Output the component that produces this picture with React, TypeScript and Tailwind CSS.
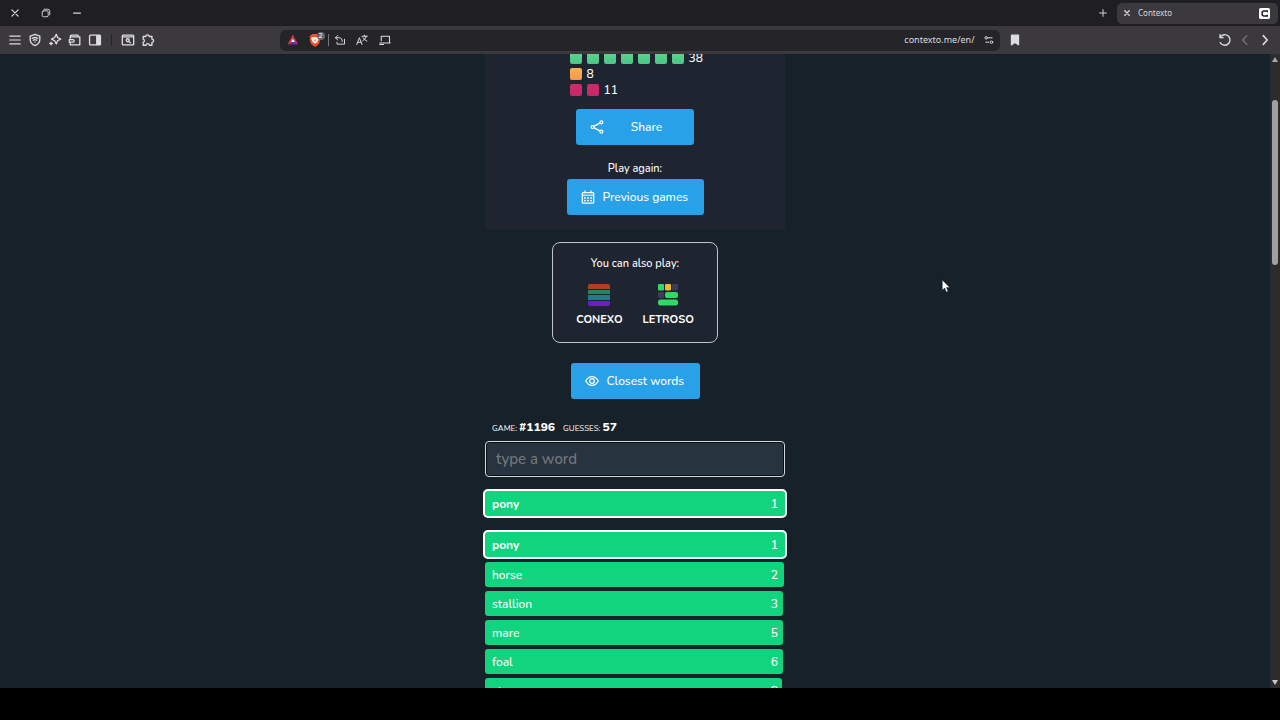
import type { ReactNode } from "react";

type Guess = { word: string; rank: number; width: string };

const guesses: Guess[] = [
  { word: "horse", rank: 2, width: "99.7%" },
  { word: "stallion", rank: 3, width: "99.4%" },
  { word: "mare", rank: 5, width: "99.2%" },
  { word: "foal", rank: 6, width: "99.2%" },
  { word: "steer", rank: 8, width: "99%" },
];

function Icon({ children, className = "size-3.5", width = 1.5 }: { children: ReactNode; className?: string; width?: number }) {
  return (
    <svg viewBox="0 0 16 16" fill="none" stroke="currentColor" strokeWidth={width} strokeLinecap="round" strokeLinejoin="round" className={`shrink-0 ${className}`} aria-hidden="true">
      {children}
    </svg>
  );
}

function IconButton({ label, children, className = "" }: { label: string; children: ReactNode; className?: string }) {
  return (
    <button type="button" aria-label={label} className={`flex size-5 shrink-0 items-center justify-center ${className}`}>
      {children}
    </button>
  );
}

function TabStrip() {
  return (
    <div className="flex h-[26px] shrink-0 items-center justify-between bg-[#1f1e23] pr-0.5 text-[#d8d8da]">
      <div className="flex items-center gap-[11px] pl-[5px]">
        <IconButton label="Close window"><Icon className="size-2.5" width={2}><path d="M3 3l10 10M13 3L3 13" /></Icon></IconButton>
        <IconButton label="Restore window"><Icon className="size-2.5"><rect x="2" y="4.500" width="9.500" height="9.500" rx="2" /><path d="M5 2h6a3 3 0 0 1 3 3v6" /></Icon></IconButton>
        <IconButton label="Minimize window"><Icon className="size-2.5" width={2}><path d="M2.500 8h11" /></Icon></IconButton>
      </div>
      <div className="flex items-center gap-1">
        <IconButton label="New tab"><Icon className="size-3" width={1.300}><path d="M8 3.500v9M3.500 8h9" /></Icon></IconButton>
        <div className="flex h-[21px] w-[161px] items-center rounded-[5px] bg-[#3b393e] pr-2">
          <IconButton label="Close tab"><Icon className="size-2.5" width={2.200}><path d="M4.500 4.500l7 7M11.500 4.500l-7 7" /></Icon></IconButton>
          <span className="flex-1 pl-px text-[8px] leading-4">Contexto</span>
          <svg viewBox="0 0 12 12" className="size-[11px]" aria-hidden="true">
            <rect width="12" height="12" rx="2" fill="#fff" />
            <path d="M9 4.600V3.200H5L3.400 4.500v3L5 8.800h4V7.400" fill="none" stroke="#1b1b1e" strokeWidth="1.600" />
          </svg>
        </div>
      </div>
    </div>
  );
}

function Toolbar() {
  return (
    <div className="flex h-7 shrink-0 items-center bg-[#3b393e] text-[#dddddf]">
      <div className="flex flex-1 items-center pl-[5px]">
        <IconButton label="Menu"><Icon width={1.300}><path d="M2 3.500h12M2 8h12M2 12.500h12" /></Icon></IconButton>
        <IconButton label="VPN"><Icon><path d="M8 1.500l5.500 2v4c0 3.500-2.500 5.800-5.500 7-3-1.200-5.500-3.500-5.500-7v-4z" /><path d="M4.800 6.200q3.200-2.200 6.400 0M6 8.300q2-1.300 4 0M8 10.300v.1" /></Icon></IconButton>
        <IconButton label="Assistant"><Icon><path d="M9.500 1.500l1.400 3.600 3.600 1.900-3.600 1.900-1.400 3.600-1.900-3.600L4 7l3.600-1.900zM3.500 10.500v3M2 12h3" /></Icon></IconButton>
        <IconButton label="Wallet"><Icon><path d="M2.500 6V4.500q0-2 2-2h7v2M2.500 4.500h11v9h-11V11.500M1.500 7.500h4a1.500 1.500 0 0 1 0 3h-4z" /></Icon></IconButton>
        <IconButton label="Sidebar"><Icon><rect x="1.800" y="2.500" width="12.400" height="11" rx="1" /><path d="M10 3h4v10h-4z" fill="currentColor" /></Icon></IconButton>
        <span className="mx-[6px] h-3 w-px bg-[#252429]" />
        <IconButton label="Search tabs"><Icon><rect x="1.500" y="2.500" width="13" height="11" rx="1" /><path d="M2 4.500h12" /><circle cx="7.700" cy="8.300" r="1.700" /><path d="M9 9.600l1.800 1.700" /></Icon></IconButton>
        <IconButton label="Extensions"><Icon><path d="M2.500 4h3a1.900 1.900 0 1 1 3.800 0h3.200v3a1.900 1.900 0 1 1 0 3.800V14H9.500a1.800 1.800 0 0 0-3.600 0H2.500v-3.500a1.800 1.800 0 0 0 0-3.500z" /></Icon></IconButton>
      </div>

      <div className="ml-1 flex h-[21px] w-[720px] shrink items-center rounded-[6px] bg-[#252429] pr-px pl-[3px]">
        <IconButton label="Rewards">
          <svg viewBox="0 0 14 14" className="size-3" aria-hidden="true"><path d="M7 1L1 12h12z" fill="#b02d83" /><path d="M7 1L1 12l6-3z" fill="#e64035" /><path d="M1 12h12L7 8.500z" fill="#6b2ca0" /><path d="M7 5.500L4.800 9.300h4.400z" fill="#fff" /></svg>
        </IconButton>
        <div className="relative ml-0.5 flex">
          <IconButton label="Shields, 2 blocked">
            <svg viewBox="0 0 14 14" className="size-3.5" aria-hidden="true"><path d="M4.500 1h5l1.500 1 1.500 1.500-.5 1.500.3 1.500L11 11l-4 3-4-3-1.300-4.500L2 5l-.5-1.500L3 2z" fill="#ec512b" /><path d="M4 4.300h6l1 1.500-1.700 2.500.3.800L7 10.500 4.400 9.100l.3-.8L3 5.800z" fill="#fff" /><path d="M5.500 6l.8.700v1.800M8.500 6l-.8.700v1.800" stroke="#ec512b" fill="none" strokeWidth=".7" /></svg>
          </IconButton>
          <span className="absolute top-0.5 left-3 flex h-2 w-2 items-center justify-center rounded-full bg-[#66656a] text-[7px] leading-[8px] text-white">2</span>
        </div>
        <span className="mr-px ml-[3px] h-3 w-px bg-[#77767b]" />
        <IconButton label="Open in app"><Icon className="size-3" width={1.300}><path d="M5 2L2 5l3 3M2 5h5q4 0 4 5M4 11v2.500h10V7" /></Icon></IconButton>
        <IconButton label="Translate" className="ml-0.5"><Icon className="size-3" width={1.300}><path d="M1 14l3.500-9L8 14M2.300 11h4.500M8 3h7M11.500 1.500V3M14 3q-1 4-5 6M9.500 5q1.500 3 5 4.500" /></Icon></IconButton>
        <IconButton label="Send to device" className="ml-[3px]"><Icon className="size-3" width={1.400}><path d="M3 9V3h11v8M1 12h14M1 14h5" /></Icon></IconButton>
        <input aria-label="Address" defaultValue="contexto.me/en/" className="min-w-0 flex-1 bg-transparent text-right text-[9px] leading-4 outline-none" />
        <IconButton label="Site settings" className="ml-1"><Icon className="size-2.5" width={1.600}><path d="M7 4.500h6M3 11.500h5" /><circle cx="3.500" cy="4.500" r="2" /><circle cx="12" cy="11.500" r="2" /></Icon></IconButton>
      </div>

      <div className="flex flex-1 items-center justify-between px-[5px]">
        <IconButton label="Bookmark"><Icon><path d="M4 2.500h8v11L8 10.500l-4 3z" fill="currentColor" /></Icon></IconButton>
        <div className="flex">
          <IconButton label="Reload"><Icon><path d="M3 4.200a6 6 0 1 1-.5 6.800M2.300 1.800v3.500h3.500" /></Icon></IconButton>
          <IconButton label="Forward" className="text-[#78777b]"><Icon><path d="M10 3L5.500 8l4.500 5" /></Icon></IconButton>
          <IconButton label="Back"><Icon width={1.800}><path d="M6 3l4.500 5L6 13" /></Icon></IconButton>
        </div>
      </div>
    </div>
  );
}

function Tiles({ count, tone, total }: { count: number; tone: string; total: number }) {
  return (
    <div className="flex h-4 items-center gap-[5px] text-[12px] leading-4 font-medium">
      {Array.from({ length: count }, (_, i) => (
        <span key={i} className={`size-3 shrink-0 rounded-[2px] ${tone}`} />
      ))}
      <span>{total}</span>
    </div>
  );
}

const buttonStyle = "flex h-9 items-center rounded-[3px] bg-[#29a1e9] text-[12px] leading-5 font-medium";

function OtherGame({ name, children }: { name: string; children: ReactNode }) {
  return (
    <a href="#" className="flex flex-col items-center gap-[6px] text-[11px] leading-4 font-bold">
      <svg viewBox="0 0 22 22" className="size-[22px]" aria-hidden="true">{children}</svg>
      {name}
    </a>
  );
}

function Highlight() {
  return (
    <div className="-mx-0.5 flex h-[29px] items-center justify-between rounded-[5px] border-2 border-white bg-[#12d47e] px-[7px] text-[12px] leading-5 font-bold">
      <span>pony</span>
      <span className="font-semibold">1</span>
    </div>
  );
}

function Game() {
  return (
    <main className="min-w-0 flex-1 overflow-hidden bg-[#17212a] font-['Nunito','Open_Sans','Noto_Sans',sans-serif] text-white">
      <div className="mx-auto flex w-[300px] flex-col">
        <section className="flex flex-col items-center bg-[#1f2530] pb-[14px]">
          <div className="-mt-1 w-[131px]">
            <Tiles count={7} tone="bg-linear-to-b from-[#5bd68d] to-[#4cc586]" total={38} />
            <Tiles count={1} tone="bg-linear-to-b from-[#f5b44d] to-[#f79550]" total={8} />
            <Tiles count={2} tone="bg-linear-to-b from-[#d12b66] to-[#c52868]" total={11} />
          </div>
          <button type="button" className={`${buttonStyle} mt-[11px] w-[118px] px-[14px]`}>
            <Icon className="size-3.5" width={1.400}><circle cx="3" cy="8" r="1.700" /><circle cx="13" cy="2.700" r="1.700" /><circle cx="13" cy="13.300" r="1.700" /><path d="M4.800 7l6.400-3.400M4.800 9l6.400 3.400" /></Icon>
            <span className="flex-1 pl-[9px] text-center">Share</span>
          </button>
          <p className="mt-4 text-[11px] leading-4 font-medium">Play again:</p>
          <button type="button" className={`${buttonStyle} mt-0.5 w-[137px] gap-2 px-[14px] whitespace-nowrap`}>
            <Icon className="size-3.5" width={1.400}><rect x="1.500" y="3" width="13" height="12" rx="1" /><path d="M2 6h12M4.500 1v2M11.500 1v2" /><path d="M4.500 9h.1M8 9h.1M11.500 9h.1M4.500 12h.1M8 12h.1M11.500 12h.1" strokeWidth="2" /></Icon>
            <span>Previous games</span>
          </button>
        </section>

        <section className="mx-auto mt-[13px] flex h-[101px] w-[166px] flex-col items-center rounded-[8px] border border-[#bfc3ca] bg-[#1f2530] pt-[13px]">
          <p className="text-[11px] leading-4 font-medium">You can also play:</p>
          <div className="mt-3 flex gap-5">
            <OtherGame name="CONEXO">
              <path d="M2 0h18a2 2 0 0 1 2 2v3H0V2a2 2 0 0 1 2-2z" fill="#b43e1b" />
              <path d="M0 6h22v4H0z" fill="#26845a" />
              <path d="M0 11h22v5H0z" fill="#217b91" />
              <path d="M0 17h22v3a2 2 0 0 1-2 2H2a2 2 0 0 1-2-2z" fill="#6720c4" />
            </OtherGame>
            <OtherGame name="LETROSO">
              <rect x="1" width="6" height="6.500" rx="1" fill="#31d865" /><rect x="8" width="6" height="6.500" rx="1" fill="#eabb2b" /><rect x="15" width="6" height="6.500" rx="1" fill="#3d3c5d" />
              <rect x="1" y="8" width="6" height="6" rx="1" fill="#3d3c5d" /><rect x="8" y="8" width="13" height="6" rx="2" fill="#31d865" /><rect x="1" y="15.500" width="20" height="6" rx="2.500" fill="#31d865" />
            </OtherGame>
          </div>
        </section>

        <button type="button" className={`${buttonStyle} mx-auto mt-5 w-[129px] gap-2 px-[14px] whitespace-nowrap`}>
          <Icon className="size-3.5" width={1.400}><path d="M.8 8Q3.500 3 8 3t7.200 5Q12.500 13 8 13T.8 8z" /><circle cx="8" cy="8" r="2.700" /></Icon>
          <span>Closest words</span>
        </button>

        <div className="mt-[18px] flex h-5 items-baseline gap-2 px-[7px] text-[8px] leading-5">
          <span>GAME: <b className="text-[12px] font-extrabold">#1196</b></span>
          <span>GUESSES: <b className="text-[12px] font-extrabold">57</b></span>
        </div>
        <input aria-label="Word" placeholder="type a word" className="mt-1 h-9 w-full rounded-[4px] border border-[#d5d7da] bg-[#273440] px-[10px] text-[15px] leading-5 font-medium ring-1 ring-[#0b0f13] outline-none ring-inset placeholder:text-[#73787c]" />
        <div className="mt-3"><Highlight /></div>
        <div className="mt-3"><Highlight /></div>
        <ul className="mt-[3px] flex flex-col gap-1 text-[12px] leading-5 font-medium">
          {guesses.map((guess) => (
            <li key={guess.word} className="grid h-[25px] items-center">
              <span className="col-start-1 row-start-1 h-full rounded-[3px] bg-[#12d47e]" style={{ width: guess.width }} />
              <span className="col-start-1 row-start-1 flex justify-between px-[7px]"><span>{guess.word}</span><span>{guess.rank}</span></span>
            </li>
          ))}
        </ul>
      </div>
    </main>
  );
}

export default function App() {
  return (
    <div className="relative flex h-screen flex-col overflow-hidden bg-black font-['Noto_Sans',sans-serif]">
      <TabStrip />
      <Toolbar />
      <div className="flex min-h-0 flex-1">
        <Game />
        <div className="flex w-[10px] shrink-0 flex-col items-center justify-between bg-[#2c2c2d] py-[3px]" aria-hidden="true">
          <svg viewBox="0 0 6 5" className="h-[5px] w-1.5"><path d="M3 0l3 5H0z" fill="#a8a8a9" /></svg>
          <span className="mt-[38px] h-[165px] w-1.5 rounded-full bg-[#a0a0a1]" />
          <svg viewBox="0 0 6 5" className="mt-auto h-[5px] w-1.5"><path d="M0 0h6L3 5z" fill="#c8c8c9" /></svg>
        </div>
      </div>
      <div className="h-8 shrink-0 bg-black" />
      <svg viewBox="0 0 10 15" className="pointer-events-none absolute top-[279px] left-[941px] h-[14px] w-[10px]" aria-hidden="true">
        <path d="M1 1v11l2.600-2.300 1.600 4.100 2-.8-1.700-4H9z" fill="#fff" stroke="#111820" strokeWidth=".5" />
      </svg>
    </div>
  );
}
